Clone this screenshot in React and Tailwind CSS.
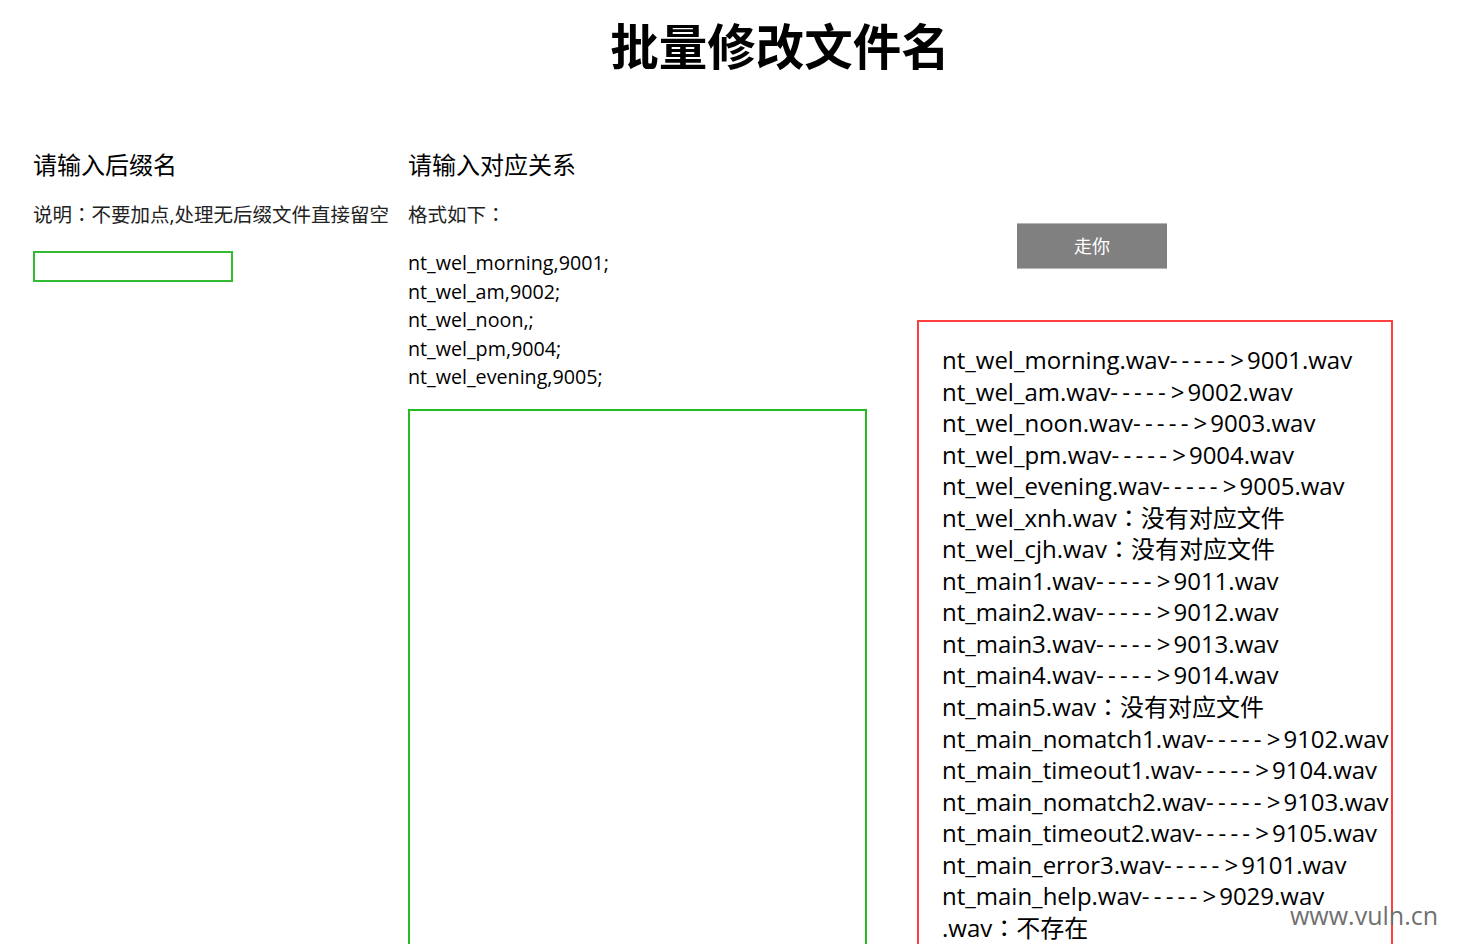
const mapping = [
  'nt_wel_morning,9001;',
  'nt_wel_am,9002;',
  'nt_wel_noon,;',
  'nt_wel_pm,9004;',
  'nt_wel_evening,9005;',
];

// [源文件, 目标文件 | null, 错误信息]
const results = [
  ['nt_wel_morning.wav', '9001.wav'],
  ['nt_wel_am.wav', '9002.wav'],
  ['nt_wel_noon.wav', '9003.wav'],
  ['nt_wel_pm.wav', '9004.wav'],
  ['nt_wel_evening.wav', '9005.wav'],
  ['nt_wel_xnh.wav', null, '没有对应文件'],
  ['nt_wel_cjh.wav', null, '没有对应文件'],
  ['nt_main1.wav', '9011.wav'],
  ['nt_main2.wav', '9012.wav'],
  ['nt_main3.wav', '9013.wav'],
  ['nt_main4.wav', '9014.wav'],
  ['nt_main5.wav', null, '没有对应文件'],
  ['nt_main_nomatch1.wav', '9102.wav'],
  ['nt_main_timeout1.wav', '9104.wav'],
  ['nt_main_nomatch2.wav', '9103.wav'],
  ['nt_main_timeout2.wav', '9105.wav'],
  ['nt_main_error3.wav', '9101.wav'],
  ['nt_main_help.wav', '9029.wav'],
  ['.wav', null, '不存在'],
];

const Colon = () => (
  <span className="leading-none" style={{ fontFamily: '"Noto Sans CJK JP", sans-serif' }}>：</span>
);

export default function App() {
  return (
    <div
      className="relative h-[944px] overflow-hidden bg-white text-black"
      style={{ fontFamily: '"Open Sans", "Noto Sans CJK SC", sans-serif' }}
    >
      <div className="flex justify-center pl-[100px] pt-[14px]">
        <h1 className="text-[48.5px] font-bold leading-[64px]">批量修改文件名</h1>
      </div>

      <div className="mt-[71px] flex pl-[33px]">
        <div className="w-[375px] shrink-0">
          <h2 className="text-[24px] leading-[32px]">请输入后缀名</h2>
          <p className="mt-[21px] h-[26px] whitespace-nowrap text-[19.5px] leading-[26px] text-[#222]">
            说明<Colon />不要加点,处理无后缀文件直接留空
          </p>
          <input className="mt-[23px] h-[31px] w-[200px] border-2 border-[#33bb33] outline-none" />
        </div>

        <div className="w-[509px] shrink-0">
          <h2 className="text-[24px] leading-[32px]">请输入对应关系</h2>
          <p className="mt-[21px] h-[26px] text-[19.5px] leading-[26px] text-[#222]">
            格式如下<Colon />
          </p>
          <div className="mt-[21px] text-[19.7px] leading-[28.5px]">
            {mapping.map((m) => (
              <div key={m}>{m}</div>
            ))}
          </div>
          <textarea className="mt-[17px] h-[560px] w-[459px] resize-none border-2 border-[#22bb22] outline-none" />
        </div>

        <div className="w-[476px] shrink-0">
          <button className="ml-[100px] mt-[74px] h-[46px] w-[150px] border-y border-[#b5b5b5] bg-[#808080] text-[18px] text-white">
            走你
          </button>
          <div className="mt-[51px] h-[640px] border-2 border-[#ff3f3f] px-[23px] pt-[22px] text-[24px] leading-[31.56px]">
            {results.map(([src, dst, err], i) => (
              <div key={i} className="h-[31.56px] whitespace-nowrap">
                {src}
                {dst ? (
                  <>
                    <span className="tracking-[4.2px]">-----</span>
                    <span className="pl-[1px] pr-[3px]">&gt;</span>
                    {dst}
                  </>
                ) : (
                  <>
                    <Colon />
                    {err}
                  </>
                )}
              </div>
            ))}
          </div>
        </div>
      </div>

      <div className="absolute left-[1290px] top-[898px] text-[25px] leading-[34px] text-[#707070]">
        www.vuln.cn
      </div>
    </div>
  );
}
